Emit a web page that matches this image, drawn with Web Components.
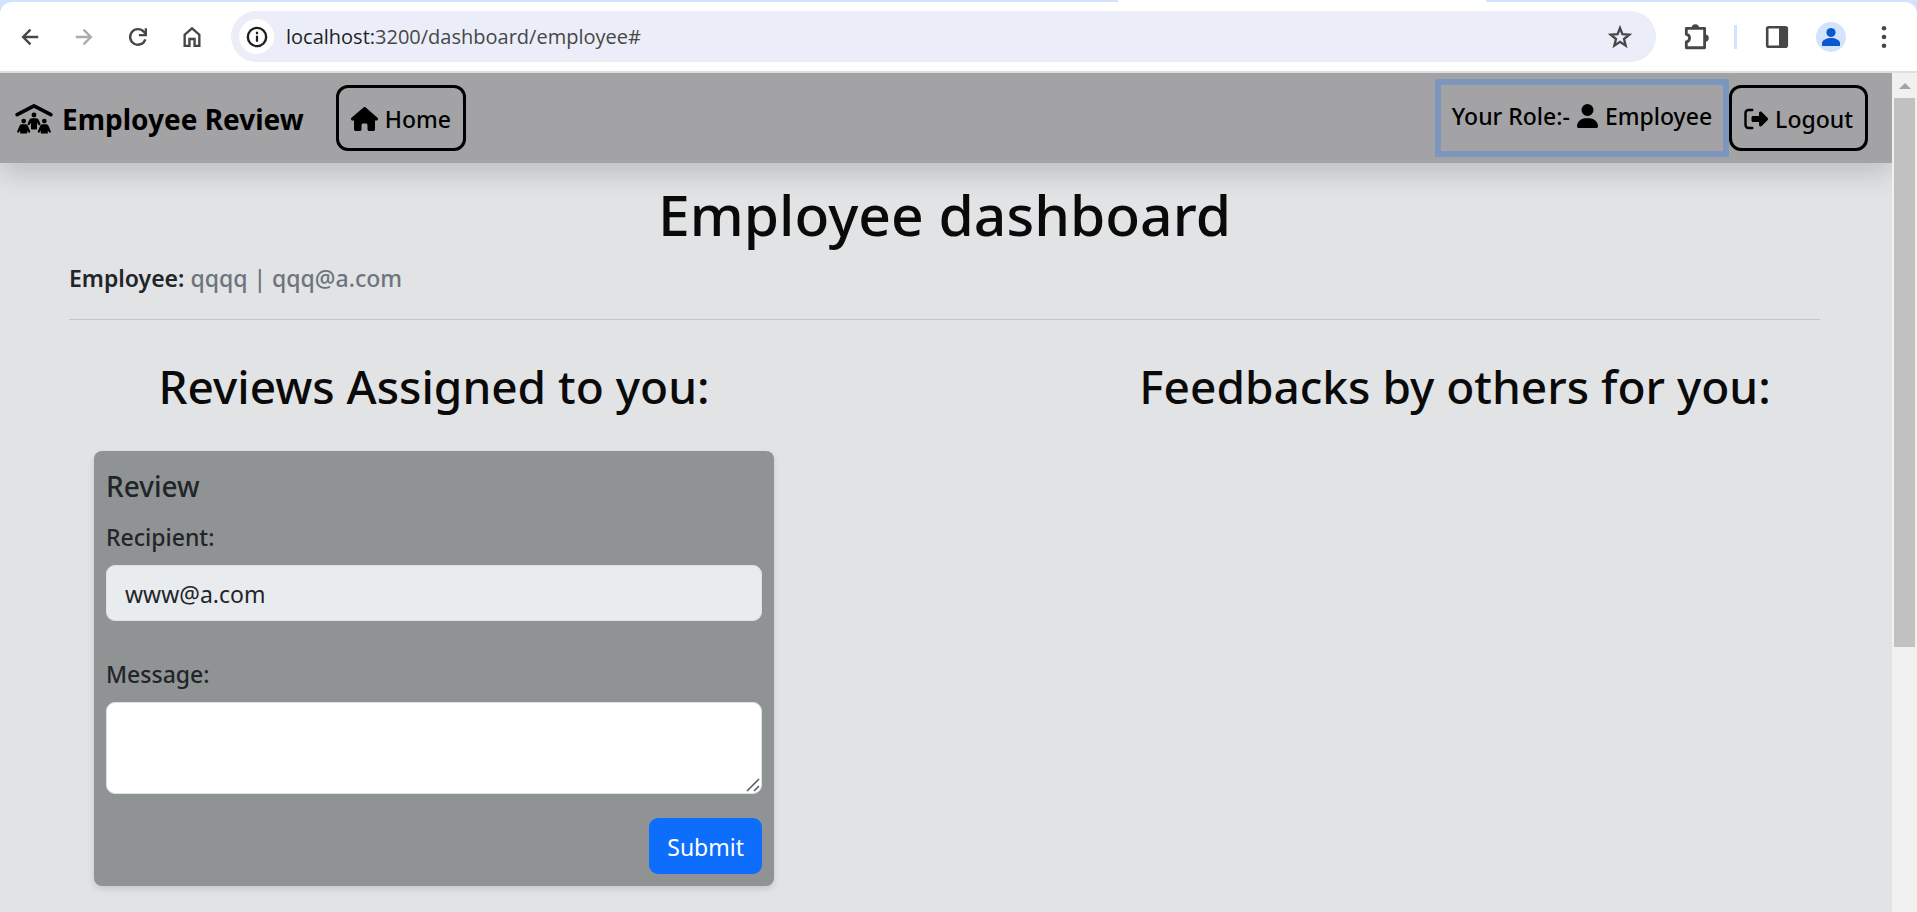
<!DOCTYPE html>
<html lang="en">
<head>
<meta charset="utf-8">
<title>Employee Review</title>
<style>
  html, body { margin: 0; height: 100%; }
  body { font-family: "Noto Sans", "Open Sans", sans-serif; font-size: 23px; line-height: 36px; color: #212529; background: #e1e3e5; }
</style>
</head>
<body>
<browser-window>
  <browser-toolbar slot="toolbar"></browser-toolbar>
  <site-nav></site-nav>
  <employee-dashboard></employee-dashboard>
</browser-window>

<script>
const define = (name, html) => {
  const template = document.createElement('template');
  template.innerHTML = html;
  customElements.define(name, class extends HTMLElement {
    constructor() {
      super();
      this.attachShadow({ mode: 'open' }).append(template.content.cloneNode(true));
    }
  });
};

const ICONS = {
  back: ['0 0 24 24', '<path d="M21 12H5M12.500 4 4.500 12l8 8" fill="none" stroke="currentColor" stroke-width="2.600"/>'],
  forward: ['0 0 24 24', '<path d="M3 12h16M11.500 4l8 8-8 8" fill="none" stroke="currentColor" stroke-width="2.600"/>'],
  reload: ['0 0 24 24', '<path d="M20 14.500A8.500 8.500 0 1 1 18.500 6.500L21 9" fill="none" stroke="currentColor" stroke-width="2.600"/><path d="M21.800 2.500v8.800H13V8.800h6.300V2.500z" fill="currentColor"/>'],
  home: ['0 0 24 24', '<path d="M4 21.700V9.500l8-7 8 7v12.200h-5.200v-7.500H9.200v7.500z" fill="none" stroke="currentColor" stroke-width="2.600"/>'],
  info: ['0 0 24 24', '<circle cx="12" cy="12" r="10" fill="none" stroke="currentColor" stroke-width="2.600"/><path d="M12 10.500v6.800M12 6.400v2.600" stroke="currentColor" stroke-width="2.400"/>'],
  star: ['0 0 24 24', '<path d="m12 3 2.400 6.200 6.800.500-5.200 4.300 1.700 6.600L12 16.900l-5.700 3.700L8 14 2.800 9.700l6.800-.500z" fill="none" stroke="currentColor" stroke-width="2.300"/>'],
  puzzle: ['0 0 26 26', '<path d="M4 5h17v18H4v-5.500c4-.500 4-6.500 0-7z" fill="none" stroke="currentColor" stroke-width="2.600" stroke-linejoin="round"/><path d="M9 4.500a3.400 3.400 0 0 1 6.800 0zM21.500 10.600a3.400 3.400 0 0 1 0 6.800z" fill="currentColor"/>'],
  panel: ['0 0 24 24', '<rect x="2.200" y="2.200" width="19.600" height="19.600" rx="1.500" fill="none" stroke="currentColor" stroke-width="2.600"/><path d="M14 2h8v20h-8z" fill="currentColor"/>'],
  profile: ['0 0 30 30', '<circle cx="15" cy="15" r="15" fill="#d3e3fd"/><circle cx="15" cy="10.500" r="4.600" fill="#0b57d0"/><path d="M6 24v-3c0-3 5-5 9-5s9 2 9 5v3z" fill="#0b57d0"/>'],
  more: ['0 0 24 24', '<circle cx="12" cy="2.500" r="2.500"/><circle cx="12" cy="12" r="2.500"/><circle cx="12" cy="21.500" r="2.500"/>'],
  house: ['0 0 576 512', '<path d="M575.8 255.5c0 18-15 32.1-32 32.1h-32l.7 160.2c0 2.7-.2 5.4-.5 8.1V472c0 22.1-17.9 40-40 40H456c-1.1 0-2.2 0-3.3-.1c-1.4 .1-2.8 .1-4.2 .1H416 392c-22.1 0-40-17.9-40-40V448 384c0-17.700-14.300-32-32-32H256c-17.700 0-32 14.300-32 32v64 24c0 22.100-17.900 40-40 40H160 128.100c-1.500 0-3-.1-4.500-.2c-1.200 .1-2.400 .2-3.600 .2H104c-22.100 0-40-17.900-40-40V360c0-.9 0-1.900 .1-2.800V287.600H32c-18 0-32-14-32-32.100c0-9 3-17 10-24L266.400 8c7-7 15-8 22-8s15 2 21 7L564.800 231.500c8 7 12 15 11 24z"/>'],
  user: ['0 0 448 512', '<path d="M224 256A128 128 0 1 0 224 0a128 128 0 1 0 0 256zm-45.700 48C79.800 304 0 383.800 0 482.300C0 498.700 13.300 512 29.700 512H418.300c16.400 0 29.700-13.300 29.700-29.700C448 383.800 368.200 304 269.700 304H178.300z"/>'],
  logout: ['0 0 512 512', '<path d="M377.900 105.900L500.700 228.700c7.200 7.200 11.300 17.100 11.300 27.300s-4.100 20.100-11.300 27.300L377.900 406.100c-6.400 6.400-15 9.900-24 9.900c-18.700 0-33.900-15.200-33.900-33.900l0-62.100-128 0c-17.700 0-32-14.300-32-32l0-64c0-17.700 14.300-32 32-32l128 0 0-62.100c0-18.700 15.200-33.900 33.900-33.900c9 0 17.600 3.600 24 9.900z"/><path d="M176 64H96a64 64 0 0 0-64 64v256a64 64 0 0 0 64 64h80" fill="none" stroke="currentColor" stroke-width="52" stroke-linecap="round"/>'],
  roof: ['0 0 640 512', '<path d="M32 182 320 32 608 182" fill="none" stroke="currentColor" stroke-width="62" stroke-linecap="round" stroke-linejoin="round"/><circle cx="320" cy="188" r="42"/><circle cx="144" cy="292" r="40"/><circle cx="496" cy="292" r="40"/><path d="M286 242h68c26 0 40 12 50 34l26 62c6 22-22 34-34 14l-24-32v98c0 10-6 16-16 16h-72c-10 0-16-6-16-16v-98l-24 32c-12 20-40 8-34-14l26-62c10-22 24-34 50-34z"/><path d="M116 346h56c22 0 34 10 42 24l42 96c6 20-20 32-32 14l-20-26v50H84v-50l-20 26c-12 18-38 6-32-14l42-96c8-14 20-24 42-24zM468 346h56c22 0 34 10 42 24l42 96c6 20-20 32-32 14l-20-26v50H436v-50l-20 26c-12 18-38 6-32-14l42-96c8-14 20-24 42-24z"/>']
};

customElements.define('ui-icon', class extends HTMLElement {
  constructor() { super(); this.attachShadow({ mode: 'open' }); }
  connectedCallback() {
    const [box, shapes] = ICONS[this.getAttribute('name')];
    this.shadowRoot.innerHTML = `<style>
      :host { display: block; flex: none; width: 24px; height: 24px; }
      svg { display: block; width: 100%; height: 100%; fill: currentColor; }
    </style><svg viewBox="${box}" aria-hidden="true">${shapes}</svg>`;
  }
});

define('browser-window', `
  <style>
    :host { display: flex; flex-direction: column; height: 100vh; overflow: hidden; }
    .view { flex: 1; min-height: 0; display: flex; }
    .page { flex: 1; min-width: 0; overflow: hidden; }
    .bar { width: 25px; box-sizing: border-box; padding: 0 2px; background: #f1f1f1; display: flex; flex-direction: column; align-items: center; }
    .arrow { height: 25px; display: flex; align-items: center; }
    .arrow svg { display: block; width: 12px; height: 6px; }
    .thumb { align-self: stretch; height: 549px; background: #c1c1c1; }
  </style>
  <slot name="toolbar"></slot>
  <div class="view">
    <div class="page"><slot></slot></div>
    <div class="bar" aria-hidden="true">
      <div class="arrow"><svg viewBox="0 0 12 6"><path d="M0 6 6 0l6 6z" fill="#a3a3a3"/></svg></div>
      <div class="thumb"></div>
    </div>
  </div>`);

define('browser-toolbar', `
  <style>
    :host { display: block; background: #d3e3fd; color: #474747; font-family: "Open Sans", sans-serif; }
    .tabs { height: 2px; display: flex; justify-content: center; }
    .tab { width: 368px; margin-left: 686px; background: #fff; }
    .row { display: flex; align-items: center; height: 69px; box-sizing: border-box; padding: 0 22px 0 19px; background: #fff; border-radius: 12px 12px 0 0; }
    .line { height: 2px; background: #dfdfdf; }
    button { border: 0; padding: 0; background: none; color: inherit; display: block; flex: none; }
    .nav { display: flex; gap: 32px; margin-right: 28px; }
    .nav ui-icon { width: 22px; height: 22px; }
    .dim { color: #ababab; }
    .address { flex: 1; min-width: 0; display: flex; align-items: center; height: 51px; box-sizing: border-box; padding: 0 24px 0 8px; border-radius: 26px; background: #ebeef8; }
    .info { display: grid; place-items: center; width: 35px; height: 35px; border-radius: 50%; background: #fff; color: #1f1f1f; }
    .info ui-icon { width: 22px; height: 22px; }
    .url { flex: 1; min-width: 0; margin-left: 12px; font-size: 20px; line-height: 28px; color: #474747; }
    .url b { font-weight: 400; color: #1f1f1f; }
    .tools { display: flex; align-items: center; margin-left: 26px; }
    .puzzle { width: 28px; height: 28px; }
    .sep { width: 3px; height: 24px; background: #d3e3fd; margin: 0 28px 0 24px; }
    .panel { width: 24px; height: 24px; }
    .profile { width: 30px; height: 30px; }
    .tools button + button { margin-left: 27px; }
    .more { width: 22px; height: 22px; }
  </style>
  <div class="tabs"><div class="tab"></div></div>
  <div class="row">
    <div class="nav">
      <button aria-label="Back"><ui-icon name="back"></ui-icon></button>
      <button aria-label="Forward" class="dim"><ui-icon name="forward"></ui-icon></button>
      <button aria-label="Reload"><ui-icon name="reload"></ui-icon></button>
      <button aria-label="Home"><ui-icon name="home"></ui-icon></button>
    </div>
    <div class="address">
      <button class="info" aria-label="Site information"><ui-icon name="info"></ui-icon></button>
      <div class="url"><b>localhost:</b>3200/dashboard/employee#</div>
      <button aria-label="Bookmark"><ui-icon name="star"></ui-icon></button>
    </div>
    <div class="tools">
      <button aria-label="Extensions"><ui-icon class="puzzle" name="puzzle"></ui-icon></button>
      <div class="sep"></div>
      <button aria-label="Side panel"><ui-icon class="panel" name="panel"></ui-icon></button>
      <button aria-label="Profile"><ui-icon class="profile" name="profile"></ui-icon></button>
      <button aria-label="Menu"><ui-icon class="more" name="more"></ui-icon></button>
    </div>
  </div>
  <div class="line"></div>`);

define('site-nav', `
  <style>
    :host { display: flex; align-items: center; height: 90px; box-sizing: border-box; padding: 0 24px 0 15px; background: #a3a3a5; color: #000; font-weight: 500; box-shadow: 0 12px 24px rgba(0, 0, 0, .15); }
    a, .role { display: flex; align-items: center; color: inherit; text-decoration: none; white-space: nowrap; }
    .brand { gap: 9px; font-size: 28px; font-weight: 700; margin-right: 32px; padding-top: 2px; }
    .brand ui-icon { width: 38px; height: 30px; }
    .link { gap: 7px; height: 66px; box-sizing: border-box; padding: 2px 12px 0; border: 3px solid #000; border-radius: 12px; }
    .role { gap: 7px; margin-left: auto; height: 78px; box-sizing: border-box; padding: 0 11px 4px; border: 6px solid #7c96bd; }
    .home { width: 27px; }
    .user { width: 21px; }
  </style>
  <a class="brand" href="#"><ui-icon name="roof"></ui-icon>Employee Review</a>
  <a class="link" href="#"><ui-icon class="home" name="house"></ui-icon>Home</a>
  <div class="role">Your Role:- <ui-icon class="user" name="user"></ui-icon>Employee</div>
  <a class="link" href="#"><ui-icon name="logout"></ui-icon>Logout</a>`);

define('employee-dashboard', `
  <style>
    :host { display: block; padding: 16px 72px 0 69px; }
    h1, h2, p { margin: 0; }
    h1 { font-size: 57px; line-height: 70px; font-weight: 500; text-align: center; color: #0a0a0a; }
    h2 { font-size: 46px; line-height: 56px; font-weight: 500; text-align: center; color: #0a0a0a; }
    p { margin-top: 11px; font-weight: 500; color: #6c757d; }
    b { font-weight: 600; color: #212529; }
    hr { margin: 23px 0 38px; border: 0; height: 1px; background: #c3c5c7; }
    .columns { display: flex; justify-content: space-between; padding: 0 25px; }
    section { width: 680px; }
    review-card { margin-top: 37px; }
  </style>
  <h1>Employee dashboard</h1>
  <p><b>Employee:</b> qqqq | qqq@a.com</p>
  <hr>
  <div class="columns">
    <section><h2>Reviews Assigned to you:</h2><review-card></review-card></section>
    <section><h2>Feedbacks by others for you:</h2></section>
  </div>`);

define('review-card', `
  <style>
    :host { display: block; padding: 12px; border-radius: 8px; background: #8f9393; box-shadow: 0 3px 6px rgba(0, 0, 0, .12); }
    form { display: flex; flex-direction: column; }
    h3 { margin: 5px 0 15px; font-size: 28px; line-height: 36px; font-weight: 500; }
    label { font-weight: 500; margin-bottom: 10px; }
    input, textarea { display: block; width: 100%; box-sizing: border-box; margin: 0; padding: 10px 18px 8px; border: 1px solid #dee2e6; border-radius: 9px; font: inherit; color: #212529; background: #fff; }
    input { height: 56px; margin-bottom: 35px; background: #e9ecef; }
    textarea { height: 92px; margin-bottom: 24px; }
    textarea::-webkit-resizer { background: url("data:image/svg+xml,%3Csvg xmlns='http://www.w3.org/2000/svg' viewBox='0 0 15 15'%3E%3Cpath d='M1 13 13 1M8 13l5-5' stroke='%23555' stroke-width='1.500'/%3E%3C/svg%3E"); }
    button { align-self: flex-end; height: 56px; padding: 2px 18px 0; border: 0; border-radius: 9px; background: #0d6efd; color: #fff; font: inherit; }
  </style>
  <form>
    <h3>Review</h3>
    <label for="recipient">Recipient:</label>
    <input id="recipient" type="email" value="www@a.com" readonly>
    <label for="message">Message:</label>
    <textarea id="message"></textarea>
    <button type="button">Submit</button>
  </form>`);
</script>
</body>
</html>
